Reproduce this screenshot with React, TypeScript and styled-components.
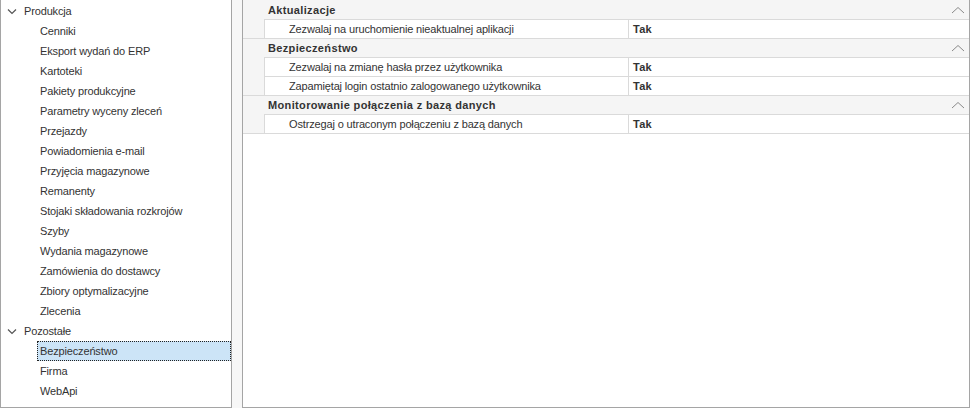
import React from "react";
import styled, { createGlobalStyle } from "styled-components";

const Global = createGlobalStyle`
  html, body { margin: 0; padding: 0; background: #ffffff; }
  body { font-family: "Liberation Sans", Arial, sans-serif; font-size: 11px; color: #333333; letter-spacing: -0.15px; }
`;

const Frame = styled.div`
  width: 971px;
  height: 409px;
  box-sizing: border-box;
  padding: 0 1px 1px 0;
  display: flex;
  background: #ffffff;
`;

const Workspace = styled.div`
  flex: 1;
  display: flex;
  gap: 10px;
  background: #f7f7f7;
`;

const TreePanel = styled.div`
  width: 232px;
  box-sizing: border-box;
  border: 1px solid #a5a5a5;
  border-top: none;
  background: #ffffff;
  padding-top: 1px;
  display: flex;
  flex-direction: column;
`;

const TreeRow = styled.div<{ $child?: boolean; $selected?: boolean }>`
  height: 20px;
  box-sizing: border-box;
  display: flex;
  align-items: center;
  white-space: nowrap;
  color: #333333;
  padding-left: ${(p) => (p.$child ? "2px" : "4px")};
  margin-left: ${(p) => (p.$child ? "36px" : "0")};
  border: 1px dotted ${(p) => (p.$selected ? "#222222" : "transparent")};
  background: ${(p) => (p.$selected ? "#cce4f7" : "transparent")};
`;

const Caret = styled.svg`
  width: 12px;
  height: 12px;
  margin-right: 6px;
  flex: none;
`;

const GridPanel = styled.div`
  flex: 1;
  box-sizing: border-box;
  border: 1px solid #a5a5a5;
  border-top: none;
  background: #ffffff;
`;

const Groups = styled.div`
  border-bottom: 1px solid #dadada;
`;

const Group = styled.div`
  background: #f5f5f5;
  border-top: 1px solid #dadada;
  &:first-child { border-top-color: #f5f5f5; }
`;

const GroupHeader = styled.div`
  height: 18px;
  display: flex;
  align-items: center;
  padding-left: 25px;
  padding-right: 4px;
  font-weight: bold;
  letter-spacing: 0.35px;
  color: #333333;
`;

const HeaderTitle = styled.span`
  flex: 1;
`;

const Collapse = styled.svg`
  width: 14px;
  height: 8px;
  flex: none;
`;

const Rows = styled.div`
  margin-left: 21px;
  border-left: 1px solid #dadada;
`;

const PropRow = styled.div`
  height: 18px;
  border-top: 1px solid #dadada;
  background: #ffffff;
  display: grid;
  grid-template-columns: 363px 1fr;
`;

const PropLabel = styled.div`
  display: flex;
  align-items: center;
  padding-left: 24px;
  white-space: nowrap;
  color: #333333;
`;

const PropValue = styled.div`
  display: flex;
  align-items: center;
  padding-left: 4px;
  border-left: 1px solid #dadada;
  font-weight: bold;
  letter-spacing: 0.3px;
  color: #333333;
`;

const tree: { label: string; children: string[] }[] = [
  {
    label: "Produkcja",
    children: [
      "Cenniki",
      "Eksport wydań do ERP",
      "Kartoteki",
      "Pakiety produkcyjne",
      "Parametry wyceny zleceń",
      "Przejazdy",
      "Powiadomienia e-mail",
      "Przyjęcia magazynowe",
      "Remanenty",
      "Stojaki składowania rozkrojów",
      "Szyby",
      "Wydania magazynowe",
      "Zamówienia do dostawcy",
      "Zbiory optymalizacyjne",
      "Zlecenia",
    ],
  },
  { label: "Pozostałe", children: ["Bezpieczeństwo", "Firma", "WebApi"] },
];

const groups: { title: string; rows: [string, string][] }[] = [
  { title: "Aktualizacje", rows: [["Zezwalaj na uruchomienie nieaktualnej aplikacji", "Tak"]] },
  {
    title: "Bezpieczeństwo",
    rows: [
      ["Zezwalaj na zmianę hasła przez użytkownika", "Tak"],
      ["Zapamiętaj login ostatnio zalogowanego użytkownika", "Tak"],
    ],
  },
  {
    title: "Monitorowanie połączenia z bazą danych",
    rows: [["Ostrzegaj o utraconym połączeniu z bazą danych", "Tak"]],
  },
];

export default function App() {
  return (
    <>
      <Global />
      <Frame>
        <Workspace>
          <TreePanel>
            {tree.map((node) => (
              <React.Fragment key={node.label}>
                <TreeRow>
                  <Caret viewBox="0 0 12 12">
                    <path d="M2 4.5 L6 8.5 L10 4.5" fill="none" stroke="#555" strokeWidth="1.2" />
                  </Caret>
                  {node.label}
                </TreeRow>
                {node.children.map((c) => (
                  <TreeRow key={c} $child $selected={c === "Bezpieczeństwo"}>
                    {c}
                  </TreeRow>
                ))}
              </React.Fragment>
            ))}
          </TreePanel>
          <GridPanel>
            <Groups>
              {groups.map((g) => (
                <Group key={g.title}>
                  <GroupHeader>
                    <HeaderTitle>{g.title}</HeaderTitle>
                    <Collapse viewBox="0 0 14 8">
                      <path d="M1 7 L7 1.5 L13 7" fill="none" stroke="#8a8a8a" strokeWidth="1" />
                    </Collapse>
                  </GroupHeader>
                  <Rows>
                    {g.rows.map(([l, v]) => (
                      <PropRow key={l}>
                        <PropLabel>{l}</PropLabel>
                        <PropValue>{v}</PropValue>
                      </PropRow>
                    ))}
                  </Rows>
                </Group>
              ))}
            </Groups>
          </GridPanel>
        </Workspace>
      </Frame>
    </>
  );
}
